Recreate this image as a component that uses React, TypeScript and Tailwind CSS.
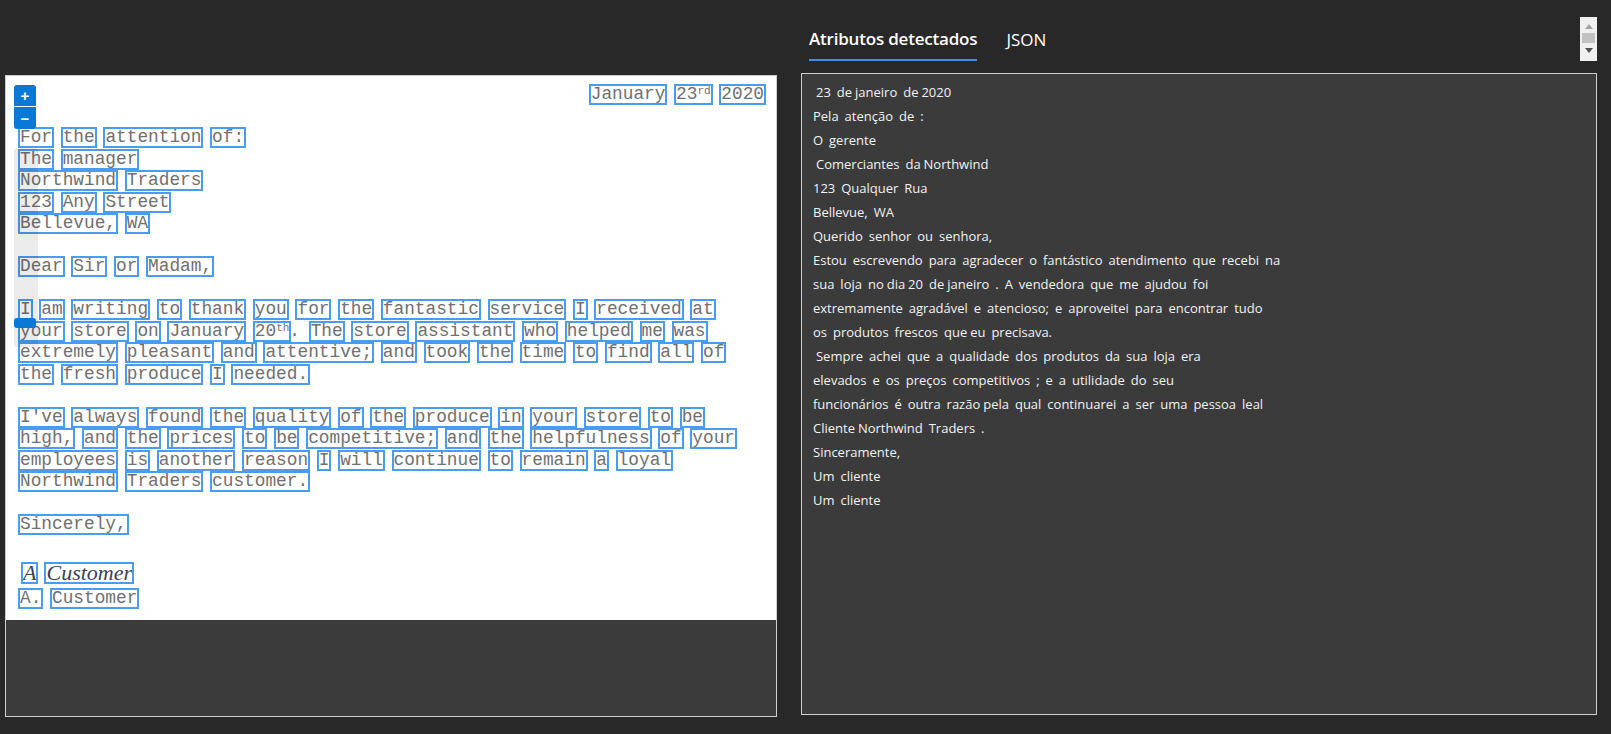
import React from "react";

const LETTER: (string | null)[] = [
  "For the attention of:",
  "The manager",
  "Northwind Traders",
  "123 Any Street",
  "Bellevue, WA",
  null,
  "Dear Sir or Madam,",
  null,
  "I am writing to thank you for the fantastic service I received at",
  "your store on January 20^th. The store assistant who helped me was",
  "extremely pleasant and attentive; and took the time to find all of",
  "the fresh produce I needed.",
  null,
  "I've always found the quality of the produce in your store to be",
  "high, and the prices to be competitive; and the helpfulness of your",
  "employees is another reason I will continue to remain a loyal",
  "Northwind Traders customer.",
  null,
  "Sincerely,",
];

const RESULT = [
  " 23  de janeiro  de 2020",
  "Pela  atenção  de  :",
  "O  gerente",
  " Comerciantes  da Northwind",
  "123  Qualquer  Rua",
  "Bellevue,  WA",
  "Querido  senhor  ou  senhora,",
  "Estou  escrevendo  para  agradecer  o  fantástico  atendimento  que  recebi  na",
  "sua  loja  no dia 20  de janeiro  .  A  vendedora  que  me  ajudou  foi",
  "extremamente  agradável  e  atencioso;  e  aproveitei  para  encontrar  tudo",
  "os  produtos  frescos  que eu  precisava.",
  " Sempre  achei  que  a  qualidade  dos  produtos  da  sua  loja  era",
  "elevados  e  os  preços  competitivos  ;  e  a  utilidade  do  seu",
  "funcionários  é  outra  razão pela  qual  continuarei  a  ser  uma  pessoa  leal",
  "Cliente Northwind  Traders  .",
  "Sinceramente,",
  "Um  cliente",
  "Um  cliente",
];

function Word({ w }: { w: string }) {
  const m = w.match(/^(\d+)\^([a-z]+)(\.?)$/);
  const box = "inline-block leading-[16px] h-[17px] outline-2 outline-[#4a9cf0]";
  if (m) {
    return (
      <>
        <span className={box}>
          {m[1]}
          <span className="relative top-[-5px] text-[11px] leading-none">{m[2]}</span>
        </span>
        {m[3]}
      </>
    );
  }
  return <span className={box}>{w}</span>;
}

function Line({ text }: { text: string }) {
  const words = text.split(" ");
  return (
    <div className="h-[21.5px] whitespace-pre">
      {words.map((w, i) => (
        <React.Fragment key={i}>
          {i > 0 && " "}
          <Word w={w} />
        </React.Fragment>
      ))}
    </div>
  );
}

function Document() {
  return (
    <div className="relative h-[544px] bg-white pl-[14px] pr-[12px] pt-[8px] text-[17.8px] leading-[21.5px] text-[#707070] font-['Liberation_Mono',monospace]">
      <div className="h-[21.5px] text-right">
        <Line text="January 23^rd 2020" />
      </div>
      <div className="h-[21.5px]" />
      {LETTER.map((l, i) =>
        l === null ? <div key={i} className="h-[21.5px]" /> : <Line key={i} text={l} />
      )}
      <div className="h-[21.5px]" />
      <div className="flex h-[31px] items-center gap-[10px] pl-[3px] text-[22px] italic text-[#3a3f5c] font-['Liberation_Serif',serif]">
        <span className="inline-block h-[18px] leading-[18px] outline-2 outline-[#4a9cf0]">A</span>
        <span className="inline-block h-[18px] leading-[18px] outline-2 outline-[#4a9cf0]">Customer</span>
      </div>
      <Line text="A. Customer" />

      {/* zoom controls */}
      <div className="absolute left-[8px] top-[72px] h-[199px] w-[24px] rounded-[3px] bg-black/[0.08]" />
      <div className="absolute left-[8px] top-[242px] h-[10px] w-[22px] rounded-[3px] bg-[#0a78d7]" />
      <div className="absolute left-[8px] top-[9px] flex w-[22px] flex-col overflow-hidden rounded-[3px] bg-[#0a78d7] text-white font-['Liberation_Sans',sans-serif]">
        <button className="flex h-[22px] items-center justify-center border-b border-white text-[15px] font-bold leading-none">+</button>
        <button className="flex h-[22px] items-center justify-center text-[15px] font-bold leading-none">−</button>
      </div>
    </div>
  );
}

function MiniScroll() {
  return (
    <div className="mt-[17px] flex h-[44px] w-[17px] flex-col items-center bg-[#f0f0f0] pt-[7px]">
      <svg width="8" height="5" viewBox="0 0 8 5">
        <path d="M4 0 L8 5 L0 5 Z" fill="#a3a3a3" />
      </svg>
      <div className="mt-[4px] h-[10px] w-[13px] bg-[#c1c1c1]" />
      <svg width="8" height="5" viewBox="0 0 8 5" className="mt-[5px]">
        <path d="M0 0 L8 0 L4 5 Z" fill="#505050" />
      </svg>
    </div>
  );
}

export default function App() {
  return (
    <div className="flex min-h-[734px] w-[1611px] bg-[#282828] pl-[5px] font-['Open_Sans',sans-serif]">
      <div className="w-[772px] pt-[75px]">
        <div className="h-[642px] border border-[#cfcfcf] bg-[#3b3b3b]">
          <Document />
        </div>
      </div>

      <div className="ml-[24px] w-[796px]">
        <div className="flex h-[73px] items-start justify-between">
          <div className="flex gap-[29px] pl-[8px] pt-[27px] text-[17px] leading-[24px] text-white">
            <button className="border-b-2 border-[#3a8ee6] pb-[8px] font-semibold tracking-[-0.2px]">Atributos detectados</button>
            <button className="pb-[8px]">JSON</button>
          </div>
          <MiniScroll />
        </div>
        <div className="h-[642px] border border-[#cfcfcf] bg-[#3b3b3b] pl-[11px] pt-[6px] text-[13px] leading-[24px] text-[#f2f2f2] [word-spacing:-0.4px]">
          {RESULT.map((l, i) => (
            <div key={i} className="whitespace-pre">
              {l}
            </div>
          ))}
        </div>
      </div>
    </div>
  );
}
